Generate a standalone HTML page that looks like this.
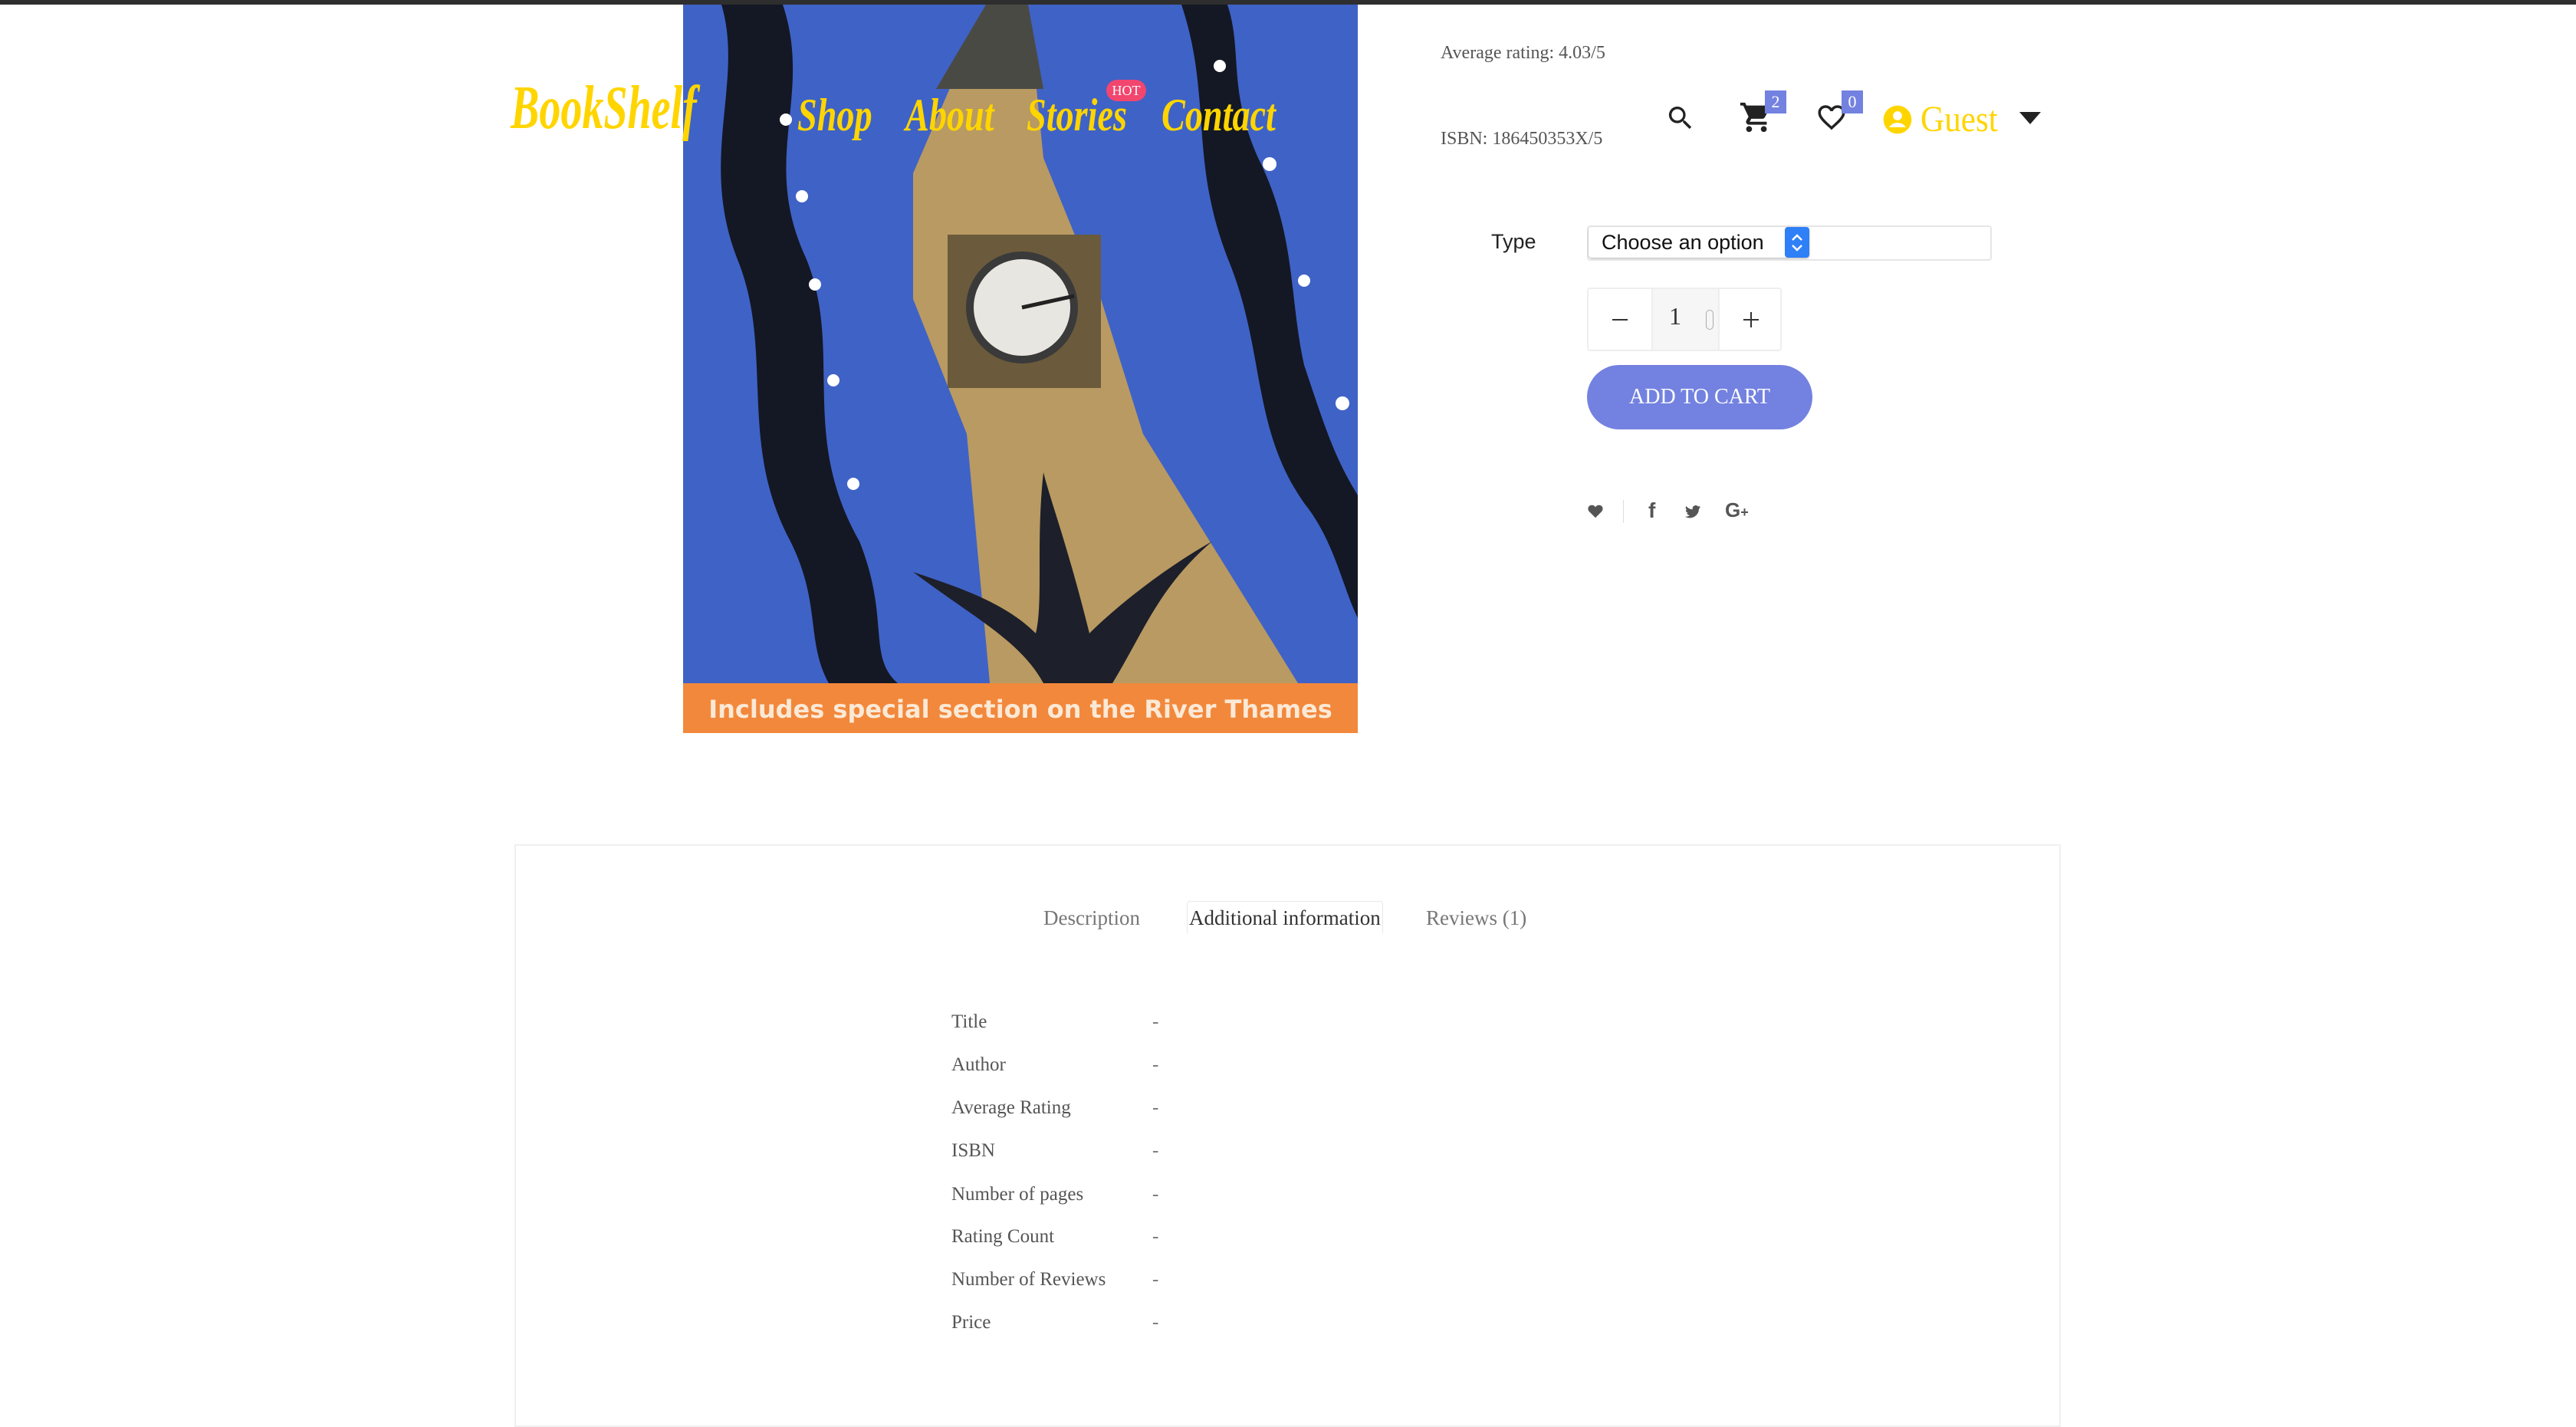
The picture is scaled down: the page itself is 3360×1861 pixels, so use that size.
<!DOCTYPE html>
<html><head><meta charset="utf-8">
<style>
*{margin:0;padding:0;box-sizing:border-box}
body{width:3360px;height:1808px;background:#fff;position:relative;overflow:hidden;font-family:"Liberation Serif",serif}
.a{position:absolute;white-space:nowrap}
.nav{font-family:"Liberation Serif",serif;font-style:italic;font-weight:bold;color:#ffd500;font-size:60px;transform:scaleX(0.77);transform-origin:left top}
.row{position:absolute;left:1241px;font-size:25px;color:#555;line-height:30px}
.dash{position:absolute;left:1503px;font-size:25px;color:#777;line-height:30px}
</style></head><body>
<div class="a" style="left:0;top:0;width:3360px;height:6px;background:#2e2e2e"></div>

<svg class="a" style="left:891px;top:6px" width="880" height="950" viewBox="0 0 880 950">
<rect width="880" height="950" fill="#3f62c6"/>
<polygon points="395,0 450,0 470,200 545,384 600,560 802,885 400,885 370,560 300,384 300,220" fill="#b89a62"/>
<polygon points="395,0 450,0 470,110 330,110" fill="#4a4a44"/>
<rect x="345" y="300" width="200" height="200" fill="#6b5a3c"/>
<circle cx="442" cy="395" r="68" fill="#e8e6e0" stroke="#3a3a3a" stroke-width="10"/>
<line x1="442" y1="395" x2="510" y2="380" stroke="#222" stroke-width="5"/>
<path d="M130,0 C170,120 100,200 160,330 C210,450 150,560 230,700 C270,800 240,850 280,885 L190,885 C160,830 180,780 140,700 C70,570 120,450 70,330 C20,200 80,100 50,0Z" fill="#141824"/>
<path d="M650,0 C690,120 660,200 710,330 C760,450 740,550 810,650 C850,700 860,760 880,800 L880,640 C850,590 840,560 810,470 C790,380 800,300 750,200 C710,110 730,60 710,0Z" fill="#141824"/>
<path d="M300,740 C380,800 440,830 470,885 L560,885 C600,820 620,760 690,700 C620,740 560,790 530,820 C500,700 480,650 470,610 C460,700 470,780 460,820 C420,780 360,760 300,740Z" fill="#1d1f2a"/>
<g fill="#fff"><circle cx="134" cy="150" r="8"/><circle cx="155" cy="250" r="8"/><circle cx="172" cy="365" r="8"/><circle cx="196" cy="490" r="8"/><circle cx="222" cy="625" r="8"/><circle cx="765" cy="208" r="9"/><circle cx="810" cy="360" r="8"/><circle cx="860" cy="520" r="9"/><circle cx="700" cy="80" r="8"/></g>
<rect x="0" y="885" width="880" height="65" fill="#f2883c"/>
<text x="440" y="930" text-anchor="middle" font-family="DejaVu Sans, sans-serif" font-weight="bold" font-size="32" fill="#fbe9d6">Includes special section on the River Thames</text>
</svg>

<div class="a nav" style="left:666px;top:96px;font-size:80px;transform:scaleX(0.7)">BookShelf</div>
<div class="a nav" style="left:1040px;top:116px">Shop</div>
<div class="a nav" style="left:1181px;top:116px">About</div>
<div class="a nav" style="left:1339px;top:116px">Stories</div>
<div class="a nav" style="left:1515px;top:116px">Contact</div>
<div class="a" style="left:1443px;top:104px;width:52px;height:28px;border-radius:14px;background:#f2466f;color:#fff;font-size:18px;text-align:center;line-height:28px">HOT</div>

<div class="a" style="left:1879px;top:56px;font-size:24px;color:#555">Average rating: 4.03/5</div>
<div class="a" style="left:1879px;top:168px;font-size:24px;color:#555">ISBN: 186450353X/5</div>

<svg class="a" style="left:2172px;top:134px" width="40" height="40" viewBox="0 0 24 24"><path fill="#222" d="M15.5 14h-.8l-.3-.3A6.5 6.5 0 1 0 9.5 16a6.5 6.5 0 0 0 4.2-1.6l.3.3v.8l5 5 1.5-1.5-5-5zm-6 0a4.5 4.5 0 1 1 0-9 4.5 4.5 0 0 1 0 9z"/></svg>
<svg class="a" style="left:2268px;top:130px" width="46" height="46" viewBox="0 0 24 24"><path fill="#222" d="M7 18a2 2 0 1 0 0 4 2 2 0 0 0 0-4zM1 2v2h2l3.6 7.6-1.4 2.4A2 2 0 0 0 7 17h12v-2H7.4l1.1-2h7.5a2 2 0 0 0 1.7-1l3.6-6.5A1 1 0 0 0 20.5 4H5.2l-.9-2H1zm16 16a2 2 0 1 0 0 4 2 2 0 0 0 0-4z"/></svg>
<div class="a" style="left:2302px;top:118px;width:28px;height:30px;background:#7381e0;color:#fff;font-size:22px;text-align:center;line-height:30px">2</div>
<svg class="a" style="left:2368px;top:132px" width="42" height="42" viewBox="0 0 24 24"><path fill="#222" d="M16.5 3c-1.7 0-3.4.8-4.5 2.1C10.9 3.8 9.2 3 7.5 3 4.4 3 2 5.4 2 8.5c0 3.8 3.4 6.9 8.6 11.5L12 21.4l1.4-1.4C18.6 15.4 22 12.3 22 8.5 22 5.4 19.6 3 16.5 3zm-4.4 15.6-.1.1-.1-.1C7.1 14.2 4 11.4 4 8.5 4 6.5 5.5 5 7.5 5c1.5 0 3 1 3.6 2.4h1.9C13.5 6 15 5 16.5 5c2 0 3.5 1.5 3.5 3.5 0 2.9-3.1 5.7-7.9 10.1z"/></svg>
<div class="a" style="left:2402px;top:118px;width:28px;height:30px;background:#7381e0;color:#fff;font-size:22px;text-align:center;line-height:30px">0</div>
<svg class="a" style="left:2455px;top:136px" width="40" height="40" viewBox="0 0 24 24"><circle cx="12" cy="12" r="11" fill="#ffd500"/><circle cx="12" cy="9" r="3.5" fill="#fff"/><path d="M5.5 18c1.5-2.5 4-3.5 6.5-3.5s5 1 6.5 3.5" fill="#fff"/></svg>
<div class="a" style="left:2505px;top:128px;font-size:48px;color:#ffd500;line-height:56px;transform:scaleX(0.9);transform-origin:left">Guest</div>
<div class="a" style="left:2634px;top:146px;width:0;height:0;border-left:14px solid transparent;border-right:14px solid transparent;border-top:16px solid #222"></div>

<div class="a" style="left:1945px;top:300px;font-family:'Liberation Sans',sans-serif;font-size:27px;color:#222">Type</div>
<div class="a" style="left:2070px;top:294px;width:528px;height:46px;border:2px solid #e6e6e6;border-radius:4px"></div>
<div class="a" style="left:2072px;top:296px;width:288px;height:40px;border-radius:4px;box-shadow:0 1px 2px #aaa;background:#fff"></div>
<div class="a" style="left:2089px;top:299px;font-family:'Liberation Sans',sans-serif;font-size:27px;color:#111;line-height:34px">Choose an option</div>
<svg class="a" style="left:2328px;top:296px" width="32" height="40" viewBox="0 0 32 40"><rect width="32" height="40" rx="4" fill="#2f7ff7"/><path d="M10 17l6-6 6 6M10 24l6 6 6-6" stroke="#fff" stroke-width="2.5" fill="none"/></svg>

<div class="a" style="left:2070px;top:375px;width:254px;height:83px;border:2px solid #eee;border-radius:4px"></div>
<div class="a" style="left:2154px;top:377px;width:89px;height:79px;background:#f6f6f6;border-left:2px solid #eee;border-right:2px solid #eee"></div>
<div class="a" style="left:2103px;top:416px;width:20px;height:2px;background:#333"></div>
<div class="a" style="left:2177px;top:394px;font-size:32px;color:#333">1</div>
<div class="a" style="left:2225px;top:404px;width:10px;height:26px;border:1px solid #aaa;border-radius:5px"></div>
<div class="a" style="left:2274px;top:416px;width:20px;height:2px;background:#333"></div>
<div class="a" style="left:2283px;top:407px;width:2px;height:20px;background:#333"></div>

<div class="a" style="left:2070px;top:476px;width:294px;height:84px;border-radius:42px;background:#7381e0;color:#fff;font-size:28px;text-align:center;line-height:84px">ADD TO CART</div>

<svg class="a" style="left:2070px;top:656px" width="22" height="22" viewBox="0 0 24 24"><path fill="#555" d="M12 21 3 12C0 8 2 3 7 3c2 0 4 1 5 3 1-2 3-3 5-3 5 0 7 5 4 9z"/></svg>
<div class="a" style="left:2117px;top:652px;width:1px;height:30px;background:#ddd"></div>
<div class="a" style="left:2150px;top:650px;font-family:'Liberation Sans',sans-serif;font-weight:bold;font-size:28px;color:#555">f</div>
<svg class="a" style="left:2196px;top:657px" width="24" height="22" viewBox="0 0 24 24"><path fill="#555" d="M23 4.5c-.8.4-1.7.6-2.6.7a4.5 4.5 0 0 0 2-2.5c-.9.5-1.9.9-2.9 1.1A4.5 4.5 0 0 0 11.8 8 12.8 12.8 0 0 1 2.5 3.3a4.5 4.5 0 0 0 1.4 6 4.4 4.4 0 0 1-2-.6 4.5 4.5 0 0 0 3.6 4.4 4.5 4.5 0 0 1-2 .1 4.5 4.5 0 0 0 4.2 3.1A9 9 0 0 1 1 18.1 12.8 12.8 0 0 0 20.7 7.3c.9-.7 1.7-1.5 2.3-2.8z"/></svg>
<div class="a" style="left:2250px;top:650px;font-family:'Liberation Sans',sans-serif;font-weight:bold;font-size:26px;color:#555">G<span style="font-size:18px">+</span></div>

<div class="a" style="left:671px;top:1101px;width:2017px;height:760px;border:2px solid #f0f0f0"></div>
<div class="a" style="left:1361px;top:1182px;font-size:27px;color:#777">Description</div>
<div class="a" style="left:1548px;top:1175px;height:42px;padding:6px 2px 0;border:1px solid #e8e8e8;border-bottom:none;border-radius:4px 4px 0 0;font-size:27px;color:#333">Additional information</div>
<div class="a" style="left:1860px;top:1182px;font-size:27px;color:#777">Reviews (1)</div>

<div class="row" style="top:1318px">Title</div><div class="dash" style="top:1318px">-</div>
<div class="row" style="top:1374px">Author</div><div class="dash" style="top:1374px">-</div>
<div class="row" style="top:1430px">Average Rating</div><div class="dash" style="top:1430px">-</div>
<div class="row" style="top:1486px">ISBN</div><div class="dash" style="top:1486px">-</div>
<div class="row" style="top:1543px">Number of pages</div><div class="dash" style="top:1543px">-</div>
<div class="row" style="top:1598px">Rating Count</div><div class="dash" style="top:1598px">-</div>
<div class="row" style="top:1654px">Number of Reviews</div><div class="dash" style="top:1654px">-</div>
<div class="row" style="top:1710px">Price</div><div class="dash" style="top:1710px">-</div>
</body></html>
